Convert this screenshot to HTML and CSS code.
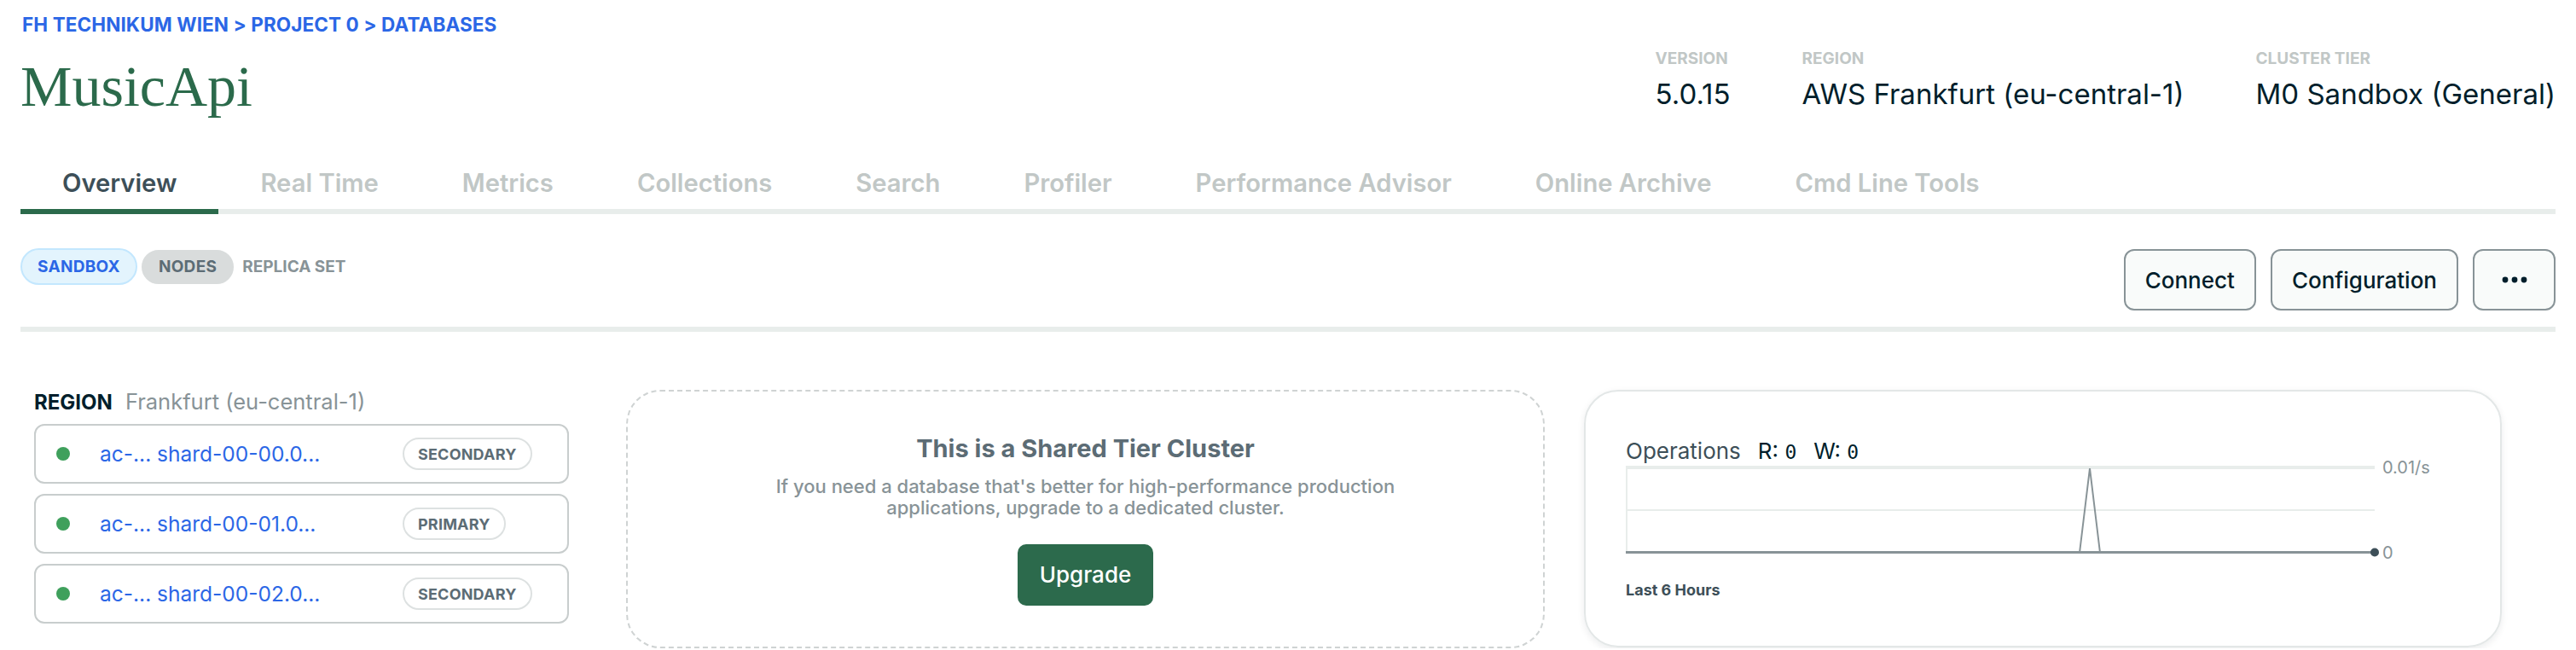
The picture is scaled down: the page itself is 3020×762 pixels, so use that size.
FILE: index.html
```html
<!DOCTYPE html>
<html lang="en">
<head>
<meta charset="utf-8">
<title>MusicApi – Overview</title>
<link rel="stylesheet" href="styles.css">
</head>
<body>
<div class="page">
  <header class="header">
    <div class="title-block">
      <nav class="crumbs">FH TECHNIKUM WIEN &gt; PROJECT 0 &gt; DATABASES</nav>
      <h1 class="title">MusicApi</h1>
    </div>
    <dl class="meta">
      <div class="meta-item"><dt>VERSION</dt><dd>5.0.15</dd></div>
      <div class="meta-item"><dt>REGION</dt><dd>AWS Frankfurt (eu-central-1)</dd></div>
      <div class="meta-item"><dt>CLUSTER TIER</dt><dd>M0 Sandbox (General)</dd></div>
    </dl>
  </header>

  <nav class="tabs">
    <span class="tab active">Overview</span>
    <span class="tab">Real Time</span>
    <span class="tab">Metrics</span>
    <span class="tab">Collections</span>
    <span class="tab">Search</span>
    <span class="tab">Profiler</span>
    <span class="tab">Performance Advisor</span>
    <span class="tab">Online Archive</span>
    <span class="tab">Cmd Line Tools</span>
  </nav>

  <div class="toolbar">
    <div class="badges">
      <span class="badge badge-blue">SANDBOX</span>
      <span class="badge badge-gray">NODES</span>
      <span class="replica">REPLICA SET</span>
    </div>
    <div class="actions">
      <button class="btn">Connect</button>
      <button class="btn">Configuration</button>
      <button class="btn btn-more" aria-label="More">
        <svg width="30" height="8" viewBox="0 0 30 8"><circle cx="4" cy="4" r="3.4" fill="#001e2b"/><circle cx="15" cy="4" r="3.4" fill="#001e2b"/><circle cx="26" cy="4" r="3.4" fill="#001e2b"/></svg>
      </button>
    </div>
  </div>

  <main class="content">
    <section class="nodes">
      <div class="region"><span class="region-label">REGION</span><span class="region-name">Frankfurt (eu-central-1)</span></div>
      <div class="node-list">
        <div class="node"><span class="dot"></span><span class="host">ac-... shard-00-00.0...</span><span class="role">SECONDARY</span></div>
        <div class="node"><span class="dot"></span><span class="host">ac-... shard-00-01.0...</span><span class="role">PRIMARY</span></div>
        <div class="node"><span class="dot"></span><span class="host">ac-... shard-00-02.0...</span><span class="role">SECONDARY</span></div>
      </div>
    </section>

    <section class="shared">
      <h2 class="shared-title">This is a Shared Tier Cluster</h2>
      <p class="shared-text">If you need a database that's better for high-performance production<br>applications, upgrade to a dedicated cluster.</p>
      <button class="upgrade">Upgrade</button>
    </section>

    <section class="chart-card">
      <div class="ops"><span class="ops-title">Operations</span><span class="ops-val">R: <code>0</code></span><span class="ops-val">W: <code>0</code></span></div>
      <svg class="chart" width="980" height="136" viewBox="0 0 980 136">
        <line x1="0" y1="14" x2="878" y2="14" stroke="#e8edeb" stroke-width="4"/>
        <line x1="0" y1="64" x2="878" y2="64" stroke="#e8edeb" stroke-width="2"/>
        <line x1="1" y1="14" x2="1" y2="114" stroke="#e8edeb" stroke-width="2"/>
        <polyline points="532,114 544,15 556,114" fill="none" stroke="#889397" stroke-width="2"/>
        <line x1="0" y1="113.5" x2="874" y2="113.5" stroke="#889397" stroke-width="3"/>
        <circle cx="878" cy="113.5" r="5" fill="#3d4f58"/>
        <text x="887" y="21" class="axis-label">0.01/s</text>
        <text x="887" y="121" class="axis-label">0</text>
      </svg>
      <div class="last">Last 6 Hours</div>
    </section>
  </main>
</div>
</body>
</html>
```

FILE: styles.css
```css
* { box-sizing: border-box; }

body {
  margin: 0;
  background: #ffffff;
  color: #001e2b;
  font-family: Inter, "Liberation Sans", sans-serif;
}

.page {
  padding: 15px 24px 0 24px;
}

/* Header */
.header {
  display: flex;
  justify-content: space-between;
  align-items: flex-start;
}

.crumbs {
  font-size: 22.5px;
  line-height: 28px;
  font-weight: 700;
  letter-spacing: 0.1px;
  color: #2b67e6;
  padding-left: 2px;
}

.title {
  margin: 20px 0 0;
  font-family: "Liberation Serif", serif;
  font-weight: 400;
  font-size: 68px;
  line-height: 76px;
  color: #2b6a4b;
}

.meta {
  display: flex;
  gap: 84px;
  margin: 43px 0 0;
}

.meta dt {
  font-size: 19px;
  line-height: 22px;
  font-weight: 700;
  color: #c1c7c6;
}

.meta dd {
  margin: 10px 0 0;
  font-size: 33px;
  line-height: 40px;
  color: #001e2b;
}

/* Tabs */
.tabs {
  display: flex;
  margin-top: 58px;
  border-bottom: 6px solid #e8edeb;
}

.tab {
  padding: 0 49px 12px;
  margin-bottom: -6px;
  border-bottom: 6px solid transparent;
  font-size: 29.2px;
  line-height: 36px;
  font-weight: 600;
  color: #c1c7c6;
  white-space: nowrap;
}

.tab.active {
  color: #3d4f58;
  border-bottom-color: #2b6a4b;
}

/* Toolbar */
.toolbar {
  display: flex;
  justify-content: space-between;
  align-items: flex-start;
  margin-top: 40px;
  padding-bottom: 19px;
  border-bottom: 6px solid #e8edeb;
}

.badges {
  display: flex;
  align-items: center;
  gap: 5px;
}

.badge {
  display: flex;
  align-items: center;
  border-radius: 22px;
  font-size: 19px;
  font-weight: 700;
  letter-spacing: 0.3px;
}

.badge-blue {
  height: 43px;
  padding: 0 18px;
  background: #e3f4fd;
  border: 2px solid #c3e7fe;
  color: #2b67e6;
}

.badge-gray {
  height: 40px;
  padding: 0 18px;
  background: #d9dcdc;
  border: 2px solid #d9dcdc;
  color: #5c6c75;
}

.replica {
  margin-left: 5px;
  font-size: 19px;
  font-weight: 700;
  color: #889397;
}

.actions {
  display: flex;
  gap: 17px;
  margin-top: 1px;
}

.btn {
  display: flex;
  align-items: center;
  justify-content: center;
  height: 72px;
  padding: 0 23px;
  border: 2px solid #889397;
  border-radius: 12px;
  background: #f9fbfa;
  font-family: inherit;
  font-size: 26px;
  font-weight: 500;
  color: #001e2b;
}

.btn-more {
  width: 97px;
  padding: 0;
}

/* Content */
.content {
  display: flex;
  align-items: flex-start;
  margin-top: 68px;
  padding-left: 16px;
}

.nodes {
  width: 627px;
}

.region {
  display: flex;
  align-items: baseline;
  gap: 15px;
  line-height: 28px;
}

.region-label {
  font-size: 24px;
  font-weight: 700;
  color: #001e2b;
}

.region-name {
  font-size: 25.5px;
  color: #889397;
}

.node-list {
  display: flex;
  flex-direction: column;
  gap: 12px;
  margin-top: 11px;
}

.node {
  display: flex;
  align-items: center;
  height: 70px;
  padding-left: 24px;
  border: 2px solid #c8cdcd;
  border-radius: 12px;
}

.dot {
  width: 16px;
  height: 16px;
  border-radius: 50%;
  background: #3fa05c;
  margin-right: 35px;
  flex: none;
}

.host {
  width: 355px;
  font-size: 24.5px;
  color: #2b67e6;
  white-space: nowrap;
}

.role {
  display: flex;
  align-items: center;
  height: 38px;
  padding: 0 16px;
  border: 2px solid #dde1e1;
  border-radius: 19px;
  font-size: 18px;
  font-weight: 700;
  letter-spacing: 0.2px;
  color: #5c6c75;
}

.shared {
  display: flex;
  flex-direction: column;
  align-items: center;
  justify-content: center;
  width: 1077px;
  height: 303px;
  margin-left: 67px;
  border: 2px dashed #cfd3d3;
  border-radius: 40px;
  text-align: center;
}

.shared-title {
  margin: 0;
  font-size: 29px;
  line-height: 36px;
  font-weight: 700;
  color: #5c6c75;
}

.shared-text {
  margin: 14px 0 0;
  font-size: 22px;
  line-height: 25px;
  font-weight: 500;
  color: #889397;
}

.upgrade {
  margin-top: 30px;
  height: 72px;
  width: 159px;
  border: none;
  border-radius: 10px;
  background: #2c6a4c;
  color: #ffffff;
  font-family: inherit;
  font-size: 26px;
  font-weight: 500;
}

.chart-card {
  width: 1076px;
  height: 302px;
  margin-left: 46px;
  padding: 56px 0 0 47px;
  border: 2px solid #e3e7e7;
  border-radius: 40px;
  box-shadow: 0 3px 8px rgba(0, 30, 43, 0.08);
}

.ops {
  display: flex;
  gap: 20px;
  font-size: 26px;
  line-height: 28px;
  color: #3d4f58;
}

.ops-val {
  color: #001e2b;
}

.ops-val code {
  font-family: "DejaVu Sans Mono", "Liberation Mono", monospace;
  font-size: 23px;
}

.chart {
  display: block;
  margin-top: -10px;
}

.axis-label {
  font-family: Inter, "Liberation Sans", sans-serif;
  font-size: 20px;
  fill: #889397;
}

.last {
  margin-top: 10px;
  font-size: 18px;
  line-height: 24px;
  font-weight: 700;
  color: #3d4f58;
}
```
